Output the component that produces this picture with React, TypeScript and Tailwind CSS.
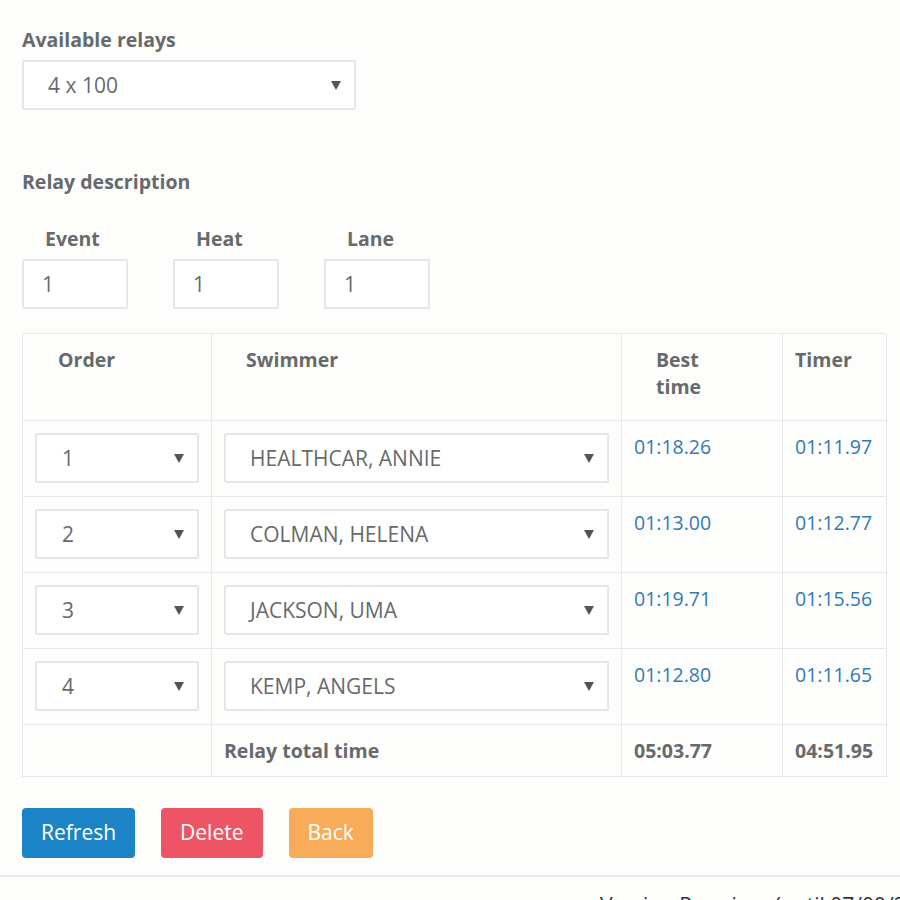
import React from "react";

const Arrow = () => (
  <svg width="10" height="9" viewBox="0 0 10 9" className="shrink-0">
    <path d="M0 0 L10 0 L5 9 Z" fill="#555" />
  </svg>
);

const Sel = ({ value, className }: { value: string; className: string }) => (
  <div
    className={`flex items-center justify-between border-2 border-[#e5e6e7] bg-white pl-[24px] pr-[13px] h-[50px] text-[21px] text-[#676a6c] rounded-[2px] ${className}`}
  >
    <span className="pt-[1px]">{value}</span>
    <Arrow />
  </div>
);

const rows = [
  { o: "1", s: "HEALTHCAR, ANNIE", b: "01:18.26", t: "01:11.97" },
  { o: "2", s: "COLMAN, HELENA", b: "01:13.00", t: "01:12.77" },
  { o: "3", s: "JACKSON, UMA", b: "01:19.71", t: "01:15.56" },
  { o: "4", s: "KEMP, ANGELS", b: "01:12.80", t: "01:11.65" },
];

export default function App() {
  return (
    <div
      className="min-h-[900px] bg-[#fdfdfc] text-[#676a6c] overflow-hidden"
      style={{ fontFamily: '"Open Sans", "Noto Sans", sans-serif' }}
    >
      <div className="pl-[22px] pr-[13px] pt-[26px]">
        <div className="text-[19.5px] leading-[27px] font-bold">Available relays</div>
        <Sel value="4 x 100" className="mt-[7px] w-[334px] pr-[8px]" />

        <div className="mt-[58px] text-[19.5px] leading-[27px] font-bold">Relay description</div>

        <div className="mt-[30px] flex gap-[45px]">
          {["Event", "Heat", "Lane"].map((l) => (
            <div key={l} className="w-[106px]">
              <div className="pl-[23px] text-[19.5px] leading-[27px] font-bold">{l}</div>
              <div className="mt-[7px] h-[50px] border-2 border-[#e5e6e7] bg-white rounded-[2px] flex items-center pl-[18px] pt-[1px] text-[21px]">
                1
              </div>
            </div>
          ))}
        </div>

        <table className="mt-[24px] w-[865px] border-collapse text-[19.5px] leading-[27px]">
          <colgroup>
            <col className="w-[189px]" />
            <col className="w-[410px]" />
            <col className="w-[162px]" />
            <col className="w-[104px]" />
          </colgroup>
          <thead>
            <tr className="h-[87px]">
              <th className="border border-[#e7eaec] text-left align-top font-bold pt-[12px] pl-[35px]">Order</th>
              <th className="border border-[#e7eaec] text-left align-top font-bold pt-[12px] pl-[34px]">Swimmer</th>
              <th className="border border-[#e7eaec] text-left align-top font-bold pt-[12px] pl-[34px]">
                Best
                <br />
                time
              </th>
              <th className="border border-[#e7eaec] text-left align-top font-bold pt-[12px] pl-[12px]">Timer</th>
            </tr>
          </thead>
          <tbody>
            {rows.map((r) => (
              <tr key={r.o} className="h-[76px]">
                <td className="border border-[#e7eaec] align-top p-[12px]">
                  <Sel value={r.o} className="w-[164px] pl-[25px]" />
                </td>
                <td className="border border-[#e7eaec] align-top p-[12px]">
                  <Sel value={r.s} className="w-[385px]" />
                </td>
                <td className="border border-[#e7eaec] align-top px-[12px] pt-[12px] text-[#337ab7]">{r.b}</td>
                <td className="border border-[#e7eaec] align-top px-[12px] pt-[12px] text-[#337ab7]">{r.t}</td>
              </tr>
            ))}
            <tr className="h-[52px]">
              <td className="border border-[#e7eaec]"></td>
              <td className="border border-[#e7eaec] px-[12px] font-bold">Relay total time</td>
              <td className="border border-[#e7eaec] px-[12px] font-bold">05:03.77</td>
              <td className="border border-[#e7eaec] px-[12px] font-bold">04:51.95</td>
            </tr>
          </tbody>
        </table>

        <div className="mt-[31px] flex gap-[26px]">
          <button className="h-[50px] px-[19px] rounded-[4px] bg-[#1c84c6] text-white text-[21px]">Refresh</button>
          <button className="h-[50px] px-[19px] rounded-[4px] bg-[#ed5565] text-white text-[21px]">Delete</button>
          <button className="h-[50px] px-[19px] rounded-[4px] bg-[#f8ac59] text-white text-[21px]">Back</button>
        </div>
      </div>

      <div className="mt-[17px] border-t-2 border-[#e7eaec]">
        <div className="pl-[600px] pt-[13px] text-[21px] text-[#333] whitespace-nowrap">
          Version Premium (until 07/09/2115)
        </div>
      </div>
    </div>
  );
}
